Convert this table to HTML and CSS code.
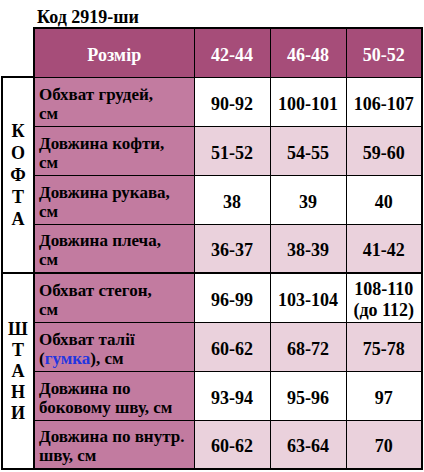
FILE: index.html
```html
<!DOCTYPE html>
<html lang="uk">
<head>
<meta charset="utf-8">
<title>Код 2919-ши</title>
<link rel="stylesheet" href="styles.css">
</head>
<body>
<div class="title">Код 2919-ши</div>
<table class="size">
  <colgroup>
    <col class="c-group"><col class="c-name"><col class="c-val"><col class="c-val"><col class="c-last">
  </colgroup>
  <thead>
    <tr>
      <th class="blank"></th>
      <th class="head first">Розмір</th>
      <th class="head">42-44</th>
      <th class="head">46-48</th>
      <th class="head last">50-52</th>
    </tr>
  </thead>
  <tbody>
    <tr class="w">
      <td class="group" rowspan="4"><span class="letters kofta">К<br>О<br>Ф<br>Т<br>А</span></td>
      <td class="name">Обхват грудей,<br>см</td><td>90-92</td><td>100-101</td><td class="last">106-107</td>
    </tr>
    <tr class="p">
      <td class="name">Довжина кофти,<br>см</td><td>51-52</td><td>54-55</td><td class="last">59-60</td>
    </tr>
    <tr class="w">
      <td class="name">Довжина рукава,<br>см</td><td>38</td><td>39</td><td class="last">40</td>
    </tr>
    <tr class="p">
      <td class="name">Довжина плеча,<br>см</td><td>36-37</td><td>38-39</td><td class="last">41-42</td>
    </tr>
    <tr class="w sep">
      <td class="group" rowspan="4"><span class="letters">Ш<br>Т<br>А<br>Н<br>И</span></td>
      <td class="name">Обхват стегон,<br>см</td><td>96-99</td><td>103-104</td><td class="last two">108-110<br>(до 112)</td>
    </tr>
    <tr class="p">
      <td class="name">Обхват талії<br>(<span class="blue">гумка</span>), см</td><td>60-62</td><td>68-72</td><td class="last">75-78</td>
    </tr>
    <tr class="w">
      <td class="name">Довжина по<br>боковому шву, см</td><td>93-94</td><td>95-96</td><td class="last">97</td>
    </tr>
    <tr class="p bottom">
      <td class="name">Довжина по внутр.<br>шву, см</td><td>60-62</td><td>63-64</td><td class="last">70</td>
    </tr>
  </tbody>
</table>
</body>
</html>
```

FILE: styles.css
```css
html, body {
  margin: 0;
  padding: 0;
  background: #ffffff;
}
body {
  font-family: "Liberation Serif", "Times New Roman", serif;
  font-weight: bold;
  color: #000;
}
.title {
  margin: 8px 0 0 37px;
  font-size: 18px;
  line-height: 19px;
  height: 19px;
}
.size {
  margin-left: 1px;
  border-collapse: collapse;
  table-layout: fixed;
  width: 420px;
}
.c-group { width: 32px; }
.c-name { width: 160px; }
.c-val { width: 76px; }
.c-last { width: 76px; }
.size th, .size td {
  border: 1px solid #000;
  padding: 4px 0 0 0;
  text-align: center;
  vertical-align: middle;
  font-size: 18px;
  line-height: 20px;
}
.size tr { height: 49px; }
.size th.blank {
  border: none;
  background: #fff;
}
.size th.head {
  background: #a64d79;
  color: #fff;
  border-top: 2px solid #000;
}
.size th.first { border-left: 2px solid #000; }
.size .last { border-right: 2px solid #000; }
.size td.name {
  background: #c27ba0;
  text-align: left;
  padding-left: 4px;
  font-size: 17px;
  line-height: 19px;
}
.size tr.w td { background: #ffffff; }
.size tr.p td { background: #ead1dc; }
.size tr td.name { background: #c27ba0; }
.size td.group {
  background: #ffffff !important;
  border: 2px solid #000;
  padding: 0;
}
.letters {
  display: block;
  font-size: 18px;
  line-height: 21px;
}
.letters.kofta { line-height: 22px; }
.size tr.sep td { border-top: 2px solid #000; }
.size tr.bottom td { border-bottom: 2px solid #000; }
.size td.two { line-height: 21px; }
.blue { color: #2236e0; }
```
